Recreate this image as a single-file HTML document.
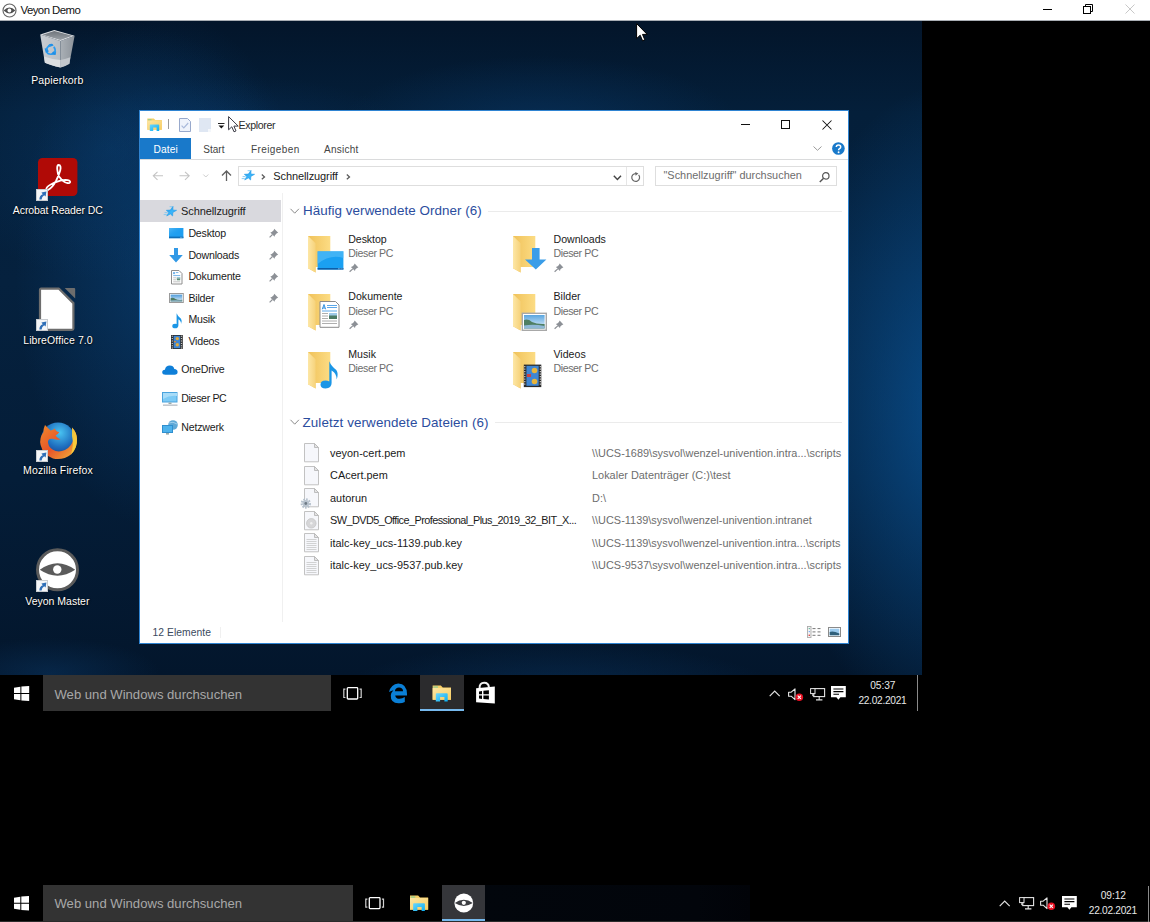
<!DOCTYPE html>
<html><head><meta charset="utf-8"><title>Veyon Demo</title>
<style>
html,body{margin:0;padding:0;}
body{width:1150px;height:922px;position:relative;overflow:hidden;background:#000;font-family:"Liberation Sans", sans-serif;}
.t{position:absolute;white-space:nowrap;font-family:"Liberation Sans", sans-serif;}
svg{overflow:visible}
</style></head><body>

<svg width="0" height="0" style="position:absolute"><defs><linearGradient id="gd" x1="0" y1="0" x2="1" y2="1"><stop offset="0" stop-color="#6cc4f8" stop-opacity="0.7"/><stop offset="0.6" stop-color="#1e9ef0" stop-opacity="0"/></linearGradient></defs></svg>
<div style="position:absolute;left:0px;top:0px;width:1150px;height:20px;background:#fff"></div>
<div style="position:absolute;left:0px;top:20px;width:1150px;height:1px;background:#a9aeb4"></div>
<svg style="position:absolute;left:1.5px;top:2.6px;" width="15" height="15" viewBox="0 0 15 15"><circle cx="7.5" cy="7.5" r="6.5" fill="none" stroke="#666" stroke-width="1.15"/><path d="M1.6 7.5 Q7.5 1.7 13.4 7.5 Q7.5 13.3 1.6 7.5Z" fill="#505050"/><circle cx="7.4" cy="7.5" r="1.9" fill="#fff"/></svg>
<div class="t" style="left:20.50px;top:4.65px;font-size:11.4px;line-height:11.4px;color:#111;letter-spacing:-0.55px">Veyon Demo</div>
<div style="position:absolute;left:1043px;top:9px;width:9px;height:1px;background:#000"></div>
<svg style="position:absolute;left:1083px;top:4px;" width="11" height="10" viewBox="0 0 11 10"><rect x="0.5" y="2.5" width="7" height="7" fill="none" stroke="#000" stroke-width="1"/><path d="M2.5 2.5 V0.5 H9.5 V7.5 H7.5" fill="none" stroke="#000" stroke-width="1"/></svg>
<svg style="position:absolute;left:1125px;top:4px;" width="10" height="10" viewBox="0 0 10 10"><path d="M0.5 0.5 L9.5 9.5 M9.5 0.5 L0.5 9.5" stroke="#c8c8c8" stroke-width="1"/></svg>
<div style="position:absolute;left:0px;top:21px;width:922px;height:654px;background:radial-gradient(ellipse 190px 330px at 960px 390px, rgba(10,88,158,0.8), rgba(10,88,158,0) 100%),radial-gradient(ellipse 170px 130px at 110px 130px, rgba(12,72,132,0.32), rgba(12,72,132,0) 100%),radial-gradient(ellipse 150px 260px at 165px 250px, rgba(12,80,145,0.45), rgba(12,80,145,0) 100%),radial-gradient(ellipse 200px 70px at 540px 105px, rgba(10,62,115,0.45), rgba(10,62,115,0) 100%),radial-gradient(ellipse 160px 50px at 240px 105px, rgba(10,55,105,0.3), rgba(10,55,105,0) 100%),radial-gradient(ellipse 110px 35px at 50px 652px, rgba(12,62,112,0.4), rgba(12,62,112,0) 100%),radial-gradient(ellipse 220px 50px at 560px 672px, rgba(12,62,112,0.45), rgba(12,62,112,0) 100%),linear-gradient(180deg,#03152a 0%,#041f3a 14%,#05213e 40%,#041d38 70%,#03162c 100%)"></div>
<svg style="position:absolute;left:40px;top:29px;" width="36" height="40" viewBox="0 0 36 40"><defs><linearGradient id="rbl" x1="0" y1="0" x2="1" y2="0"><stop offset="0" stop-color="#c9cdd2"/><stop offset="1" stop-color="#b9bec4"/></linearGradient><linearGradient id="rbr" x1="0" y1="0" x2="1" y2="0"><stop offset="0" stop-color="#aab0b6"/><stop offset="1" stop-color="#8d939a"/></linearGradient><linearGradient id="rbi" x1="0" y1="0" x2="0" y2="1"><stop offset="0" stop-color="#6d737a"/><stop offset="1" stop-color="#9aa0a6"/></linearGradient></defs><path d="M0.2 5.6 L20.5 11.9 L20.5 38.5 Q11 36.5 4.9 33.8Z" fill="url(#rbl)"/><path d="M20.5 11.9 L34.6 6.7 L29.4 34.8 Q25 37.5 20.5 38.5Z" fill="url(#rbr)"/><path d="M4 27.5 Q12 30.5 20.5 31 L20.5 38.5 Q11 36.5 4.9 33.8Z" fill="#dcdee1"/><path d="M20.5 31 Q26 30 30.3 28.3 L29.4 34.8 Q25 37.5 20.5 38.5Z" fill="#c3c7cc"/><path d="M0.2 5.6 L14.3 0.9 L34.6 6.7 L20.5 11.9Z" fill="#e2e4e7"/><path d="M2.6 5.7 L14.3 1.9 L32.2 6.8 L20.4 10.9Z" fill="url(#rbi)"/><g fill="#1e8ee6"><path d="M7.5 17.2 Q9.5 14 12.6 15 L13.6 16.6 L10.8 17.6Z"/><path d="M4.6 19.5 L5.8 23.8 L8.8 22.6 L7.2 19.2Z"/><path d="M10.5 25.5 L15.6 26 L16.2 22.5 L13.2 22.4Z"/></g><g fill="none" stroke="#2a9bf0" stroke-width="1.7"><path d="M6.4 21.5 Q6.6 17.4 10.5 16.6"/><path d="M13.8 17.8 Q16 20.5 14.6 23.8"/><path d="M12.6 25 Q8.5 26 6.5 23"/></g></svg>
<div class="t" style="left:-42.70px;width:200px;text-align:center;top:74.61px;font-size:10.5px;line-height:10.5px;color:#fff;text-shadow:0 1px 2px rgba(0,0,0,0.9),0 0 1px rgba(0,0,0,0.8);letter-spacing:0.15px">Papierkorb</div>
<svg style="position:absolute;left:38px;top:158px;" width="40" height="38" viewBox="0 0 40 38"><rect x="0" y="0" width="39.4" height="38" rx="4.5" fill="#b00a06"/><path d="M20.6 7 Q23.5 7.2 22.2 12.5 Q21 17 18 23 Q14 30 10.3 31.8 Q8 32.8 8.4 30.6 Q9.2 28 16 24.8 Q23 22 27.5 21.8 Q32 22 32.2 23.8 Q32.2 25.6 29 25 Q25 24 21.5 19 Q19.4 15.8 19.2 11 Q19 7.1 20.6 7Z" fill="none" stroke="#fff" stroke-width="1.8" stroke-linejoin="round"/></svg>
<svg style="position:absolute;left:36px;top:189px;" width="12" height="12" viewBox="0 0 12 12"><rect x="0.5" y="0.5" width="11" height="11" fill="#f4f6f8" stroke="#c8ccd0" stroke-width="1"/><path d="M3.4 10.6 Q3.2 6.6 6.8 5.2 L5.4 3.6 L10.4 2.4 L9.6 7.4 L8.2 6.2 Q5.8 7.4 5.6 10.6Z" fill="#2f6fb7"/></svg>
<div class="t" style="left:-42.20px;width:200px;text-align:center;top:205.01px;font-size:10.5px;line-height:10.5px;color:#fff;text-shadow:0 1px 2px rgba(0,0,0,0.9),0 0 1px rgba(0,0,0,0.8);letter-spacing:-0.1px">Acrobat Reader DC</div>
<svg style="position:absolute;left:39px;top:287px;" width="38" height="45" viewBox="0 0 38 45"><path d="M2 1.7 H20 L34.4 16.1 V41.5 Q34.4 42.8 33 42.8 H2.2 Q1 42.8 1 41.5 V3 Q1 1.7 2.2 1.7Z" fill="#fff" stroke="#6d6d6d" stroke-width="2.2" stroke-linejoin="round"/><path d="M25.7 1 H35.2 Q36.2 1 36.2 2 V11.6Z" fill="#6d6d6d"/></svg>
<svg style="position:absolute;left:36px;top:319px;" width="12" height="12" viewBox="0 0 12 12"><rect x="0.5" y="0.5" width="11" height="11" fill="#f4f6f8" stroke="#c8ccd0" stroke-width="1"/><path d="M3.4 10.6 Q3.2 6.6 6.8 5.2 L5.4 3.6 L10.4 2.4 L9.6 7.4 L8.2 6.2 Q5.8 7.4 5.6 10.6Z" fill="#2f6fb7"/></svg>
<div class="t" style="left:-42.00px;width:200px;text-align:center;top:335.41px;font-size:10.5px;line-height:10.5px;color:#fff;text-shadow:0 1px 2px rgba(0,0,0,0.9),0 0 1px rgba(0,0,0,0.8);letter-spacing:0.1px">LibreOffice 7.0</div>
<svg style="position:absolute;left:37px;top:419px;" width="42" height="42" viewBox="0 0 42 42"><defs><radialGradient id="fxg" cx="0.55" cy="0.3" r="0.7"><stop offset="0" stop-color="#49c4f2"/><stop offset="0.6" stop-color="#1f6fbf"/><stop offset="1" stop-color="#173e8c"/></radialGradient><linearGradient id="fxo" x1="0" y1="0" x2="1" y2="1"><stop offset="0" stop-color="#f08a2a"/><stop offset="0.5" stop-color="#e8542a"/><stop offset="1" stop-color="#f4b83a"/></linearGradient></defs><circle cx="21" cy="20.5" r="17" fill="url(#fxg)"/><path d="M8 6 Q6.2 10 6.5 13 Q2 19 3.6 26 Q6 36 16 39.5 Q26 41.5 34 35.5 Q40.5 29 40 20 Q39.6 13 35 8.5 Q37.5 14 36.6 19 Q35.5 27 28 31 Q21 34 15.5 30.5 Q10.5 27 11 22 Q12 19 15.5 19.8 Q20 21 23.5 20.5 Q19.6 18.4 18.5 16.5 Q21 15.6 22.3 13 Q19 12.8 17.8 9.5 Q16.5 11 13.5 11.6 Q11 9 8 6Z" fill="url(#fxo)"/><path d="M35 8.5 Q39.6 13 40 20 Q40.5 29 34 35.5 Q37 26 35 17Z" fill="#f9d23c" opacity="0.9"/></svg>
<svg style="position:absolute;left:36px;top:450px;" width="12" height="12" viewBox="0 0 12 12"><rect x="0.5" y="0.5" width="11" height="11" fill="#f4f6f8" stroke="#c8ccd0" stroke-width="1"/><path d="M3.4 10.6 Q3.2 6.6 6.8 5.2 L5.4 3.6 L10.4 2.4 L9.6 7.4 L8.2 6.2 Q5.8 7.4 5.6 10.6Z" fill="#2f6fb7"/></svg>
<div class="t" style="left:-42.00px;width:200px;text-align:center;top:465.41px;font-size:10.5px;line-height:10.5px;color:#fff;text-shadow:0 1px 2px rgba(0,0,0,0.9),0 0 1px rgba(0,0,0,0.8);letter-spacing:0.15px">Mozilla Firefox</div>
<svg style="position:absolute;left:36px;top:548px;" width="44" height="44" viewBox="0 0 44 44"><circle cx="21.5" cy="21.8" r="20" fill="#fff" stroke="#5b5b5b" stroke-width="3"/><path d="M3.8 21.8 Q21.5 8.8 39.2 21.8 Q21.5 33.6 3.8 21.8Z" fill="#5b5b5b"/><circle cx="21.3" cy="21.5" r="4.2" fill="#fff"/></svg>
<svg style="position:absolute;left:36px;top:580px;" width="12" height="12" viewBox="0 0 12 12"><rect x="0.5" y="0.5" width="11" height="11" fill="#f4f6f8" stroke="#c8ccd0" stroke-width="1"/><path d="M3.4 10.6 Q3.2 6.6 6.8 5.2 L5.4 3.6 L10.4 2.4 L9.6 7.4 L8.2 6.2 Q5.8 7.4 5.6 10.6Z" fill="#2f6fb7"/></svg>
<div class="t" style="left:-42.70px;width:200px;text-align:center;top:595.91px;font-size:10.5px;line-height:10.5px;color:#fff;text-shadow:0 1px 2px rgba(0,0,0,0.9),0 0 1px rgba(0,0,0,0.8);letter-spacing:0px">Veyon Master</div>
<div style="position:absolute;left:0px;top:675px;width:922px;height:36px;background:#000"></div>
<div style="position:absolute;left:43px;top:675px;width:288px;height:36px;background:#333"></div>
<div class="t" style="left:54.50px;top:687.81px;font-size:13.1px;line-height:13.1px;color:#a8a8a8;">Web und Windows durchsuchen</div>
<div style="position:absolute;left:917px;top:675px;width:1px;height:36px;background:#8a8a8a"></div>
<div style="position:absolute;left:43px;top:885px;width:310px;height:36px;background:#333"></div>
<div class="t" style="left:54.50px;top:897.41px;font-size:13.1px;line-height:13.1px;color:#a8a8a8;">Web und Windows durchsuchen</div>
<div style="position:absolute;left:485px;top:885px;width:265px;height:36px;background:linear-gradient(90deg,#02060c 0%,#02050b 80%,#010308 100%)"></div>
<div style="position:absolute;left:442px;top:885px;width:43px;height:36px;background:#35363a"></div>
<div style="position:absolute;left:442px;top:919px;width:43px;height:2px;background:#76b9ed"></div>
<div style="position:absolute;left:0px;top:921px;width:1150px;height:1px;background:#2b2b2b"></div>
<div style="position:absolute;left:1148px;top:886px;width:1px;height:36px;background:#8a8a8a"></div>
<svg style="position:absolute;left:14px;top:686px;" width="15.2" height="15" viewBox="0 0 15.2 15"><path d="M0 1.80 L6.38 0.82 V7.05 H0Z" fill="#fff"/><path d="M7.38 0.60 L15.20 0 V7.05 H7.38Z" fill="#fff"/><path d="M0 7.95 H6.38 V14.17 L0 13.20Z" fill="#fff"/><path d="M7.38 7.95 H15.20 V15.00 L7.38 14.40Z" fill="#fff"/></svg>
<svg style="position:absolute;left:343.3px;top:687.3px;" width="19" height="12.7" viewBox="0 0 19 12.7"><rect x="4.3" y="0.7" width="10.4" height="11.3" rx="0.8" fill="none" stroke="#fff" stroke-width="1.3"/><path d="M2.4 2.2 H0.8 V10.5 H2.4 M16.6 2.2 H18.2 V10.5 H16.6" fill="none" stroke="#d0d0d0" stroke-width="1.2"/></svg>
<svg style="position:absolute;left:385px;top:680px;" width="26" height="26" viewBox="0 0 26 26"><path fill-rule="evenodd" d="M4 12 Q6 4 13.3 3.4 Q21.8 3.6 22 14 V15.4 H10.2 Q10.8 18.8 14.5 18.8 Q17.5 18.8 19.8 17 V22 Q17 23.4 13.5 23.2 Q5.4 23 5.8 15.5 Q6 12.5 8.4 10.2 Q6.2 10.8 4 12Z M9.9 11.3 Q10.4 7.6 14 7.6 Q17.8 7.6 18.1 11.3Z" fill="#0a7fd6"/></svg>
<div style="position:absolute;left:420px;top:675px;width:44px;height:36px;background:#2b2b2d"></div>
<div style="position:absolute;left:420px;top:709px;width:44px;height:2px;background:#76b9ed"></div>
<svg style="position:absolute;left:432.3px;top:685.3px;overflow:hidden" width="19.5" height="16.7" viewBox="0 0 15 13.2"><defs><linearGradient id="tfb1" x1="0" y1="0" x2="1" y2="1"><stop offset="0" stop-color="#fde6a4"/><stop offset="1" stop-color="#f7cd62"/></linearGradient><linearGradient id="tbl1" x1="0" y1="0" x2="1" y2="1"><stop offset="0" stop-color="#6fd6fa"/><stop offset="1" stop-color="#08aef2"/></linearGradient></defs><path d="M0.3 0.4 H6.8 L8.3 1.9 H14.8 V11.7 H0.3Z" fill="#f7cf66"/><rect x="0.3" y="2.4" width="14.5" height="9.3" fill="url(#tfb1)"/><rect x="0.9" y="1" width="3.6" height="1.3" fill="#a3cf8c"/><path d="M2.8 13 V7.2 Q2.8 6.5 3.5 6.5 H11.5 Q12.2 6.5 12.2 7.2 V13 H9.6 V9.5 H6.2 V13Z" fill="url(#tbl1)"/></svg>
<svg style="position:absolute;left:472px;top:678px;" width="26" height="28" viewBox="0 0 26 28"><path d="M7.6 10 Q7.4 4.8 12.2 4.8 Q16.6 4.8 16.9 9.4" fill="none" stroke="#f0f0f0" stroke-width="2"/><path d="M4.1 10.2 L22.8 8.4 V25.6 L4.1 24.2Z" fill="#fff"/><path d="M7 13.4 L10 13 V16.3 H7Z M11.4 12.8 L16.9 12.2 V16.3 H11.4Z M7 17.6 H10 V20.9 L7 20.6Z M11.4 17.6 H16.9 V21.6 L11.4 21.1Z" fill="#000"/></svg>
<svg style="position:absolute;left:768.5px;top:690px;" width="12" height="7" viewBox="0 0 12 7"><path d="M0.7 6.2 L5.7 1 L10.7 6.2" fill="none" stroke="#e0e0e0" stroke-width="1.2"/></svg>
<svg style="position:absolute;left:788.2px;top:687.8px;" width="16" height="14" viewBox="0 0 16 14"><path d="M0.6 4.2 H3.2 L7 0.8 V11.6 L3.2 8.2 H0.6Z" fill="none" stroke="#e6e6e6" stroke-width="1.1" stroke-linejoin="round"/><circle cx="11.3" cy="9.2" r="3.8" fill="#e81123"/><path d="M9.7 7.6 L12.9 10.8 M12.9 7.6 L9.7 10.8" stroke="#fff" stroke-width="1.1"/></svg>
<svg style="position:absolute;left:810px;top:687.8px;" width="16" height="13" viewBox="0 0 16 13"><rect x="3.8" y="0.6" width="10.8" height="8" fill="none" stroke="#e6e6e6" stroke-width="1.1"/><path d="M9.2 8.6 V11.4 M6 11.9 H12.4" stroke="#e6e6e6" stroke-width="1.1"/><rect x="0.6" y="0.6" width="4.4" height="5" fill="#000" stroke="#e6e6e6" stroke-width="1"/><path d="M2.8 5.6 V8 H3.8" stroke="#e6e6e6" stroke-width="1" fill="none"/></svg>
<svg style="position:absolute;left:831.1px;top:685.8px;" width="15" height="15" viewBox="0 0 15 15"><path d="M0 0 H14.8 V11.2 H9.4 L7.4 13.8 L5.4 11.2 H0Z" fill="#fff"/><path d="M2.4 3 H12.4 M2.4 5.6 H12.4 M2.4 8.2 H8" stroke="#000" stroke-width="1.1"/></svg>
<div class="t" style="left:870.30px;top:680.57px;font-size:10.2px;line-height:10.2px;color:#e8e8e8;letter-spacing:-0.1px">05:37</div>
<div class="t" style="left:858.40px;top:695.97px;font-size:10.2px;line-height:10.2px;color:#e8e8e8;letter-spacing:-0.3px">22.02.2021</div>
<svg style="position:absolute;left:14.1px;top:895.7px;" width="15" height="14.5" viewBox="0 0 15 14.5"><path d="M0 1.74 L6.30 0.80 V6.81 H0Z" fill="#fff"/><path d="M7.30 0.58 L15.00 0 V6.81 H7.30Z" fill="#fff"/><path d="M0 7.69 H6.30 V13.70 L0 12.76Z" fill="#fff"/><path d="M7.30 7.69 H15.00 V14.50 L7.30 13.92Z" fill="#fff"/></svg>
<svg style="position:absolute;left:364.7px;top:896.9px;" width="19.3" height="12.3" viewBox="0 0 19.3 12.3"><rect x="4.3" y="0.7" width="10.7" height="10.9" rx="0.8" fill="none" stroke="#fff" stroke-width="1.3"/><path d="M2.4 2.2 H0.8 V10.1 H2.4 M16.9 2.2 H18.5 V10.1 H16.9" fill="none" stroke="#d0d0d0" stroke-width="1.2"/></svg>
<svg style="position:absolute;left:409px;top:894.5px;overflow:hidden" width="20" height="16.5" viewBox="0 0 15 13.2"><defs><linearGradient id="tfb2" x1="0" y1="0" x2="1" y2="1"><stop offset="0" stop-color="#fde6a4"/><stop offset="1" stop-color="#f7cd62"/></linearGradient><linearGradient id="tbl2" x1="0" y1="0" x2="1" y2="1"><stop offset="0" stop-color="#6fd6fa"/><stop offset="1" stop-color="#08aef2"/></linearGradient></defs><path d="M0.3 0.4 H6.8 L8.3 1.9 H14.8 V11.7 H0.3Z" fill="#f7cf66"/><rect x="0.3" y="2.4" width="14.5" height="9.3" fill="url(#tfb2)"/><rect x="0.9" y="1" width="3.6" height="1.3" fill="#a3cf8c"/><path d="M2.8 13 V7.2 Q2.8 6.5 3.5 6.5 H11.5 Q12.2 6.5 12.2 7.2 V13 H9.6 V9.5 H6.2 V13Z" fill="url(#tbl2)"/></svg>
<svg style="position:absolute;left:453px;top:893px;" width="22" height="20" viewBox="0 0 22 20"><circle cx="10.8" cy="10" r="9.4" fill="#fff"/><path d="M1.8 10 Q10.8 3.4 19.8 10 Q10.8 15.8 1.8 10Z" fill="#3d3e42"/><circle cx="10.8" cy="9.8" r="2.1" fill="#fff"/></svg>
<svg style="position:absolute;left:999px;top:899.5px;" width="12" height="7" viewBox="0 0 12 7"><path d="M0.7 6.2 L5.7 1 L10.7 6.2" fill="none" stroke="#e0e0e0" stroke-width="1.2"/></svg>
<svg style="position:absolute;left:1018.5px;top:897.4px;" width="16" height="13" viewBox="0 0 16 13"><rect x="3.8" y="0.6" width="10.8" height="8" fill="none" stroke="#e6e6e6" stroke-width="1.1"/><path d="M9.2 8.6 V11.4 M6 11.9 H12.4" stroke="#e6e6e6" stroke-width="1.1"/><rect x="0.6" y="0.6" width="4.4" height="5" fill="#000" stroke="#e6e6e6" stroke-width="1"/><path d="M2.8 5.6 V8 H3.8" stroke="#e6e6e6" stroke-width="1" fill="none"/></svg>
<svg style="position:absolute;left:1040px;top:897px;" width="16" height="14" viewBox="0 0 16 14"><path d="M0.6 4.2 H3.2 L7 0.8 V11.6 L3.2 8.2 H0.6Z" fill="none" stroke="#e6e6e6" stroke-width="1.1" stroke-linejoin="round"/><circle cx="11.3" cy="9.2" r="3.8" fill="#e81123"/><path d="M9.7 7.6 L12.9 10.8 M12.9 7.6 L9.7 10.8" stroke="#fff" stroke-width="1.1"/></svg>
<svg style="position:absolute;left:1062px;top:896px;" width="15" height="15" viewBox="0 0 15 15"><path d="M0 0 H14.8 V11.2 H9.4 L7.4 13.8 L5.4 11.2 H0Z" fill="#fff"/><path d="M2.4 3 H12.4 M2.4 5.6 H12.4 M2.4 8.2 H8" stroke="#000" stroke-width="1.1"/></svg>
<div class="t" style="left:1100.80px;top:890.77px;font-size:10.2px;line-height:10.2px;color:#e8e8e8;letter-spacing:-0.1px">09:12</div>
<div class="t" style="left:1088.80px;top:905.97px;font-size:10.2px;line-height:10.2px;color:#e8e8e8;letter-spacing:-0.3px">22.02.2021</div>
<div style="position:absolute;left:139px;top:110px;width:708px;height:532px;background:#fff;border:1px solid #2f84d2"></div>
<svg style="position:absolute;left:147px;top:117.5px;" width="16" height="15" viewBox="0 0 16 15"><defs><linearGradient id="tfb" x1="0" y1="0" x2="1" y2="1"><stop offset="0" stop-color="#fde6a4"/><stop offset="1" stop-color="#f7cd62"/></linearGradient><linearGradient id="tbl" x1="0" y1="0" x2="1" y2="1"><stop offset="0" stop-color="#6fd6fa"/><stop offset="1" stop-color="#08aef2"/></linearGradient></defs><path d="M0.3 0.4 H6.8 L8.3 1.9 H14.8 V11.7 H0.3Z" fill="#f7cf66"/><rect x="0.3" y="2.4" width="14.5" height="9.3" fill="url(#tfb)"/><rect x="0.9" y="1" width="3.6" height="1.3" fill="#a3cf8c"/><path d="M2.8 13 V7.2 Q2.8 6.5 3.5 6.5 H11.5 Q12.2 6.5 12.2 7.2 V13 H9.6 V9.5 H6.2 V13Z" fill="url(#tbl)"/></svg>
<div style="position:absolute;left:168px;top:119px;width:1px;height:10px;background:#9a9a9a"></div>
<svg style="position:absolute;left:179px;top:118px;" width="12" height="14" viewBox="0 0 12 14"><path d="M0.5 0.5 H8.5 L11.5 3.5 V13.5 H0.5Z" fill="#eef3fb" stroke="#98a9cc" stroke-width="1"/><path d="M2.6 7.6 L4.8 9.8 L9.2 5" fill="none" stroke="#a9badb" stroke-width="1.2"/></svg>
<svg style="position:absolute;left:199px;top:118px;" width="12" height="14" viewBox="0 0 12 14"><path d="M0 0 H12 V14 H0Z" fill="#dfe7f3"/><path d="M9 11 H12 V14 H9Z" fill="#f4f7fb"/></svg>
<svg style="position:absolute;left:218px;top:122px;" width="7" height="7" viewBox="0 0 7 7"><rect x="0" y="1" width="6.5" height="1" fill="#222"/><path d="M0.5 3.6 H6.2 L3.35 6.6Z" fill="#111"/></svg>
<div class="t" style="left:238.50px;top:119.73px;font-size:10.6px;line-height:10.6px;color:#2b2b2b;letter-spacing:-0.35px">Explorer</div>
<div style="position:absolute;left:741px;top:124px;width:9px;height:1px;background:#111"></div>
<div style="position:absolute;left:781px;top:120px;width:9px;height:9px;border:1px solid #111;box-sizing:border-box"></div>
<svg style="position:absolute;left:822px;top:120px;" width="10" height="10" viewBox="0 0 10 10"><path d="M0.5 0.5 L9.5 9.5 M9.5 0.5 L0.5 9.5" stroke="#111" stroke-width="1.05"/></svg>
<div style="position:absolute;left:140px;top:138px;width:51px;height:21px;background:#1979ca"></div>
<div class="t" style="left:153.60px;top:144.97px;font-size:10.2px;line-height:10.2px;color:#fff;letter-spacing:0.1px">Datei</div>
<div class="t" style="left:203.30px;top:145.13px;font-size:10px;line-height:10px;color:#444;">Start</div>
<div class="t" style="left:251.00px;top:145.13px;font-size:10px;line-height:10px;color:#444;letter-spacing:0.4px">Freigeben</div>
<div class="t" style="left:324.00px;top:145.13px;font-size:10px;line-height:10px;color:#444;letter-spacing:0.25px">Ansicht</div>
<div style="position:absolute;left:140px;top:159px;width:708px;height:1px;background:#dadbdc"></div>
<svg style="position:absolute;left:813px;top:146px;" width="9" height="5" viewBox="0 0 9 5"><path d="M0.5 0.5 L4.5 4.3 L8.5 0.5" fill="none" stroke="#9b9b9b" stroke-width="1"/></svg>
<svg style="position:absolute;left:831.5px;top:141.8px;" width="13" height="13" viewBox="0 0 13 13"><circle cx="6.4" cy="6.5" r="6.3" fill="#1979ca"/><path d="M4.3 5.1 Q4.3 2.9 6.5 2.9 Q8.7 2.9 8.7 4.9 Q8.7 6.2 7.3 6.8 Q6.6 7.2 6.6 8.2" fill="none" stroke="#fff" stroke-width="1.5"/><circle cx="6.6" cy="10.2" r="0.95" fill="#fff"/></svg>
<svg style="position:absolute;left:152px;top:171px;" width="12" height="10" viewBox="0 0 12 10"><path d="M11 4.8 H1.5 M5.5 0.8 L1.3 4.8 L5.5 8.8" fill="none" stroke="#c4c4c4" stroke-width="1.1"/></svg>
<svg style="position:absolute;left:179px;top:171px;" width="12" height="10" viewBox="0 0 12 10"><path d="M0.5 4.8 H10 M6 0.8 L10.2 4.8 L6 8.8" fill="none" stroke="#c4c4c4" stroke-width="1.1"/></svg>
<svg style="position:absolute;left:203px;top:174px;" width="6" height="4" viewBox="0 0 6 4"><path d="M0.3 0.5 L2.8 3 L5.3 0.5" fill="none" stroke="#c8c8c8" stroke-width="0.9"/></svg>
<svg style="position:absolute;left:220.5px;top:170px;" width="11" height="11" viewBox="0 0 11 11"><path d="M5.5 11 V1.2 M1 5.5 L5.5 1 L10 5.5" fill="none" stroke="#5f5f5f" stroke-width="1.3"/></svg>
<div style="position:absolute;left:238px;top:166px;width:406px;height:20px;border:1px solid #dedede;box-sizing:border-box"></div>
<div style="position:absolute;left:626px;top:167px;width:1px;height:18px;background:#e6e6e6"></div>
<svg style="position:absolute;left:241.8px;top:169.8px;" width="14" height="11" viewBox="0 0 14 11"><defs><linearGradient id="sg" x1="0" y1="0" x2="1" y2="1"><stop offset="0" stop-color="#1b8fe0"/><stop offset="0.55" stop-color="#3ab6fb"/><stop offset="1" stop-color="#1a97ea"/></linearGradient></defs><path d="M9.00 0.30 L8.92 4.04 L12.60 4.30 L8.82 6.46 L8.60 10.00 L6.35 7.89 L2.70 10.00 L4.77 6.46 L2.30 4.30 L6.35 4.04Z" fill="url(#sg)" stroke="#2a9de8" stroke-width="0.6" stroke-linejoin="round"/><path d="M5.6 0.7 H8.3 M0.6 6.6 H3.6 M-0.3 8.6 H2.8" stroke="#7cc6f2" stroke-width="0.9"/></svg>
<svg style="position:absolute;left:261px;top:174px;" width="5" height="7" viewBox="0 0 5 7"><path d="M0.8 0.6 L3.5 2.9 L0.8 5.2" fill="none" stroke="#5a5a5a" stroke-width="1.25"/></svg>
<div class="t" style="left:273.30px;top:170.89px;font-size:11px;line-height:11px;color:#1a1a1a;letter-spacing:-0.1px">Schnellzugriff</div>
<svg style="position:absolute;left:345.5px;top:174px;" width="5" height="7" viewBox="0 0 5 7"><path d="M0.8 0.6 L3.5 2.9 L0.8 5.2" fill="none" stroke="#5a5a5a" stroke-width="1.25"/></svg>
<svg style="position:absolute;left:613px;top:175px;" width="9" height="6" viewBox="0 0 9 6"><path d="M0.8 0.8 L4.4 4.6 L8 0.8" fill="none" stroke="#444" stroke-width="1.4"/></svg>
<svg style="position:absolute;left:630.5px;top:171.5px;" width="10" height="11" viewBox="0 0 10 11"><path d="M7.6 2.9 A3.9 3.9 0 1 1 4.9 1.6" fill="none" stroke="#666" stroke-width="1.2"/><path d="M4.2 0 L7.4 1.5 L4.6 3.8Z" fill="#666"/></svg>
<div style="position:absolute;left:655px;top:166px;width:182px;height:20px;border:1px solid #dedede;box-sizing:border-box"></div>
<div class="t" style="left:663.50px;top:170.37px;font-size:10.9px;line-height:10.9px;color:#6d6d6d;letter-spacing:0.0px">"Schnellzugriff" durchsuchen</div>
<svg style="position:absolute;left:818.5px;top:172px;" width="11" height="11" viewBox="0 0 11 11"><circle cx="6.8" cy="3.9" r="3.2" fill="none" stroke="#555" stroke-width="1.2"/><path d="M4.6 6.2 L0.8 10" stroke="#555" stroke-width="1.5"/></svg>
<div style="position:absolute;left:140px;top:200px;width:141px;height:22px;background:#d9d9de"></div>
<div style="position:absolute;left:282px;top:193px;width:1px;height:429px;background:#f0f0f0"></div>
<svg style="position:absolute;left:163.5px;top:206px;" width="14" height="11" viewBox="0 0 14 11"><defs><linearGradient id="sg2" x1="0" y1="0" x2="1" y2="1"><stop offset="0" stop-color="#1b8fe0"/><stop offset="0.55" stop-color="#3ab6fb"/><stop offset="1" stop-color="#1a97ea"/></linearGradient></defs><path d="M9.00 0.30 L8.92 4.04 L12.60 4.30 L8.82 6.46 L8.60 10.00 L6.35 7.89 L2.70 10.00 L4.77 6.46 L2.30 4.30 L6.35 4.04Z" fill="url(#sg2)" stroke="#2a9de8" stroke-width="0.6" stroke-linejoin="round"/><path d="M5.6 0.7 H8.3 M0.6 6.6 H3.6 M-0.3 8.6 H2.8" stroke="#7cc6f2" stroke-width="0.9"/></svg>
<div class="t" style="left:181.00px;top:205.89px;font-size:11px;line-height:11px;color:#1a1a1a;letter-spacing:-0.1px">Schnellzugriff</div>
<div class="t" style="left:188.40px;top:227.93px;font-size:10.6px;line-height:10.6px;color:#1a1a1a;letter-spacing:-0.2px">Desktop</div>
<svg style="position:absolute;left:169px;top:228.0px;" width="15" height="11" viewBox="0 0 15 11"><rect x="0" y="0" width="14.4" height="10.2" fill="#1e9ef0"/><rect x="0" y="0" width="14.4" height="10.2" fill="url(#gd)"/><rect x="0" y="8.6" width="14.4" height="1.6" fill="#0f6fb8"/><path d="M11.2 9.4 H13.6" stroke="#cfe8fa" stroke-width="0.6" stroke-dasharray="0.6 0.5"/></svg>
<svg style="position:absolute;left:269px;top:228.4px;" width="10" height="10" viewBox="0 0 10 10"><path d="M5.2 0.8 L9.2 4.8 L7.8 5.3 L5.9 7.2 L5.6 8.7 L1.3 4.4 L2.8 4.1 L4.7 2.2Z" fill="#8c9096"/><path d="M3.5 6.5 L0.6 9.4" stroke="#8c9096" stroke-width="1.1"/></svg>
<div class="t" style="left:188.40px;top:249.53px;font-size:10.6px;line-height:10.6px;color:#1a1a1a;letter-spacing:-0.2px">Downloads</div>
<svg style="position:absolute;left:169.3px;top:248.0px;" width="15" height="15" viewBox="0 0 15 15"><path d="M5 0 H9 V7 H13.8 L7 14.6 L0.2 7 H5Z" fill="#3199e6"/></svg>
<svg style="position:absolute;left:269px;top:250.0px;" width="10" height="10" viewBox="0 0 10 10"><path d="M5.2 0.8 L9.2 4.8 L7.8 5.3 L5.9 7.2 L5.6 8.7 L1.3 4.4 L2.8 4.1 L4.7 2.2Z" fill="#8c9096"/><path d="M3.5 6.5 L0.6 9.4" stroke="#8c9096" stroke-width="1.1"/></svg>
<div class="t" style="left:188.40px;top:271.13px;font-size:10.6px;line-height:10.6px;color:#1a1a1a;letter-spacing:-0.2px">Dokumente</div>
<svg style="position:absolute;left:171px;top:269.8px;" width="12" height="15" viewBox="0 0 12 15"><path d="M0.5 0.5 H8 L11 3.5 V14 H0.5Z" fill="#fff" stroke="#8e8e8e" stroke-width="1"/><path d="M2.2 4.2 L3 2 L3.8 4.2" stroke="#2f8fe0" stroke-width="0.7" fill="none"/><path d="M4.8 2.6 H7.4 M2.2 5.6 H9.2" stroke="#3a93e0" stroke-width="0.7"/><path d="M2.2 7.8 H5 M2.2 9.8 H5 M2.2 11.8 H9.2" stroke="#9a9a9a" stroke-width="0.6"/><rect x="5.8" y="7.3" width="3.4" height="3" fill="#5f8f75"/><rect x="5.8" y="7.3" width="3.4" height="1.2" fill="#a9d0ea"/></svg>
<svg style="position:absolute;left:269px;top:271.6px;" width="10" height="10" viewBox="0 0 10 10"><path d="M5.2 0.8 L9.2 4.8 L7.8 5.3 L5.9 7.2 L5.6 8.7 L1.3 4.4 L2.8 4.1 L4.7 2.2Z" fill="#8c9096"/><path d="M3.5 6.5 L0.6 9.4" stroke="#8c9096" stroke-width="1.1"/></svg>
<div class="t" style="left:188.40px;top:292.73px;font-size:10.6px;line-height:10.6px;color:#1a1a1a;letter-spacing:-0.2px">Bilder</div>
<svg style="position:absolute;left:169px;top:293.00000000000006px;" width="15" height="10" viewBox="0 0 15 10"><defs><linearGradient id="sbsky" x1="0" y1="0" x2="0" y2="1"><stop offset="0" stop-color="#4c9ada"/><stop offset="1" stop-color="#e2f0fa"/></linearGradient></defs><rect x="0.5" y="0.5" width="13.8" height="9" fill="#fff" stroke="#9a9a9a" stroke-width="1"/><rect x="1.6" y="1.6" width="11.6" height="6.8" fill="url(#sbsky)"/><path d="M1.6 5.2 Q4 4.2 6.5 6 Q9 7.2 13.2 6.8 V8.4 H1.6Z" fill="#4f7a62"/><path d="M1.6 7.4 Q7 6.8 13.2 7.6 V8.4 H1.6Z" fill="#8db5d2"/></svg>
<svg style="position:absolute;left:269px;top:293.20000000000005px;" width="10" height="10" viewBox="0 0 10 10"><path d="M5.2 0.8 L9.2 4.8 L7.8 5.3 L5.9 7.2 L5.6 8.7 L1.3 4.4 L2.8 4.1 L4.7 2.2Z" fill="#8c9096"/><path d="M3.5 6.5 L0.6 9.4" stroke="#8c9096" stroke-width="1.1"/></svg>
<div class="t" style="left:188.40px;top:314.33px;font-size:10.6px;line-height:10.6px;color:#1a1a1a;letter-spacing:-0.2px">Musik</div>
<svg style="position:absolute;left:171.5px;top:312.8px;" width="11" height="16" viewBox="0 0 11 16"><path d="M4.6 0.3 Q5.8 3.6 9 5.8 Q10.6 8.2 9 11.2 Q9.4 8 6.4 6.2 V12.2 Q6.4 15.3 3.1 15.3 Q0.3 15.3 0.3 13.2 Q0.3 10.8 3.1 10.8 Q4 10.8 4.6 11.1Z" fill="#1b96e6"/></svg>
<div class="t" style="left:188.40px;top:335.93px;font-size:10.6px;line-height:10.6px;color:#1a1a1a;letter-spacing:-0.2px">Videos</div>
<svg style="position:absolute;left:171px;top:334.79999999999995px;" width="12" height="15" viewBox="0 0 12 15"><rect x="0" y="0" width="11.8" height="14" fill="#2b2b2b"/><rect x="2.6" y="0.8" width="6.6" height="12.4" fill="#3f86d3"/><circle cx="6.3" cy="3.6" r="1.7" fill="#e2a93a"/><circle cx="6.3" cy="9.8" r="1.7" fill="#e2a93a"/><rect x="3" y="6" width="2" height="1.4" fill="#c84"/><path d="M0.7 1.2 H1.9 M0.7 3.6 H1.9 M0.7 6 H1.9 M0.7 8.4 H1.9 M0.7 10.8 H1.9 M0.7 13 H1.9 M9.9 1.2 H11.1 M9.9 3.6 H11.1 M9.9 6 H11.1 M9.9 8.4 H11.1 M9.9 10.8 H11.1 M9.9 13 H11.1" stroke="#ddd" stroke-width="1"/></svg>
<div class="t" style="left:181.30px;top:364.33px;font-size:10.6px;line-height:10.6px;color:#1a1a1a;letter-spacing:-0.2px">OneDrive</div>
<svg style="position:absolute;left:161.5px;top:364.5px;" width="16" height="10" viewBox="0 0 16 10"><path d="M3.6 9.8 Q0.2 9.8 0.2 7.3 Q0.2 4.9 2.9 4.7 Q3.8 0.6 7.8 0.6 Q11.3 0.6 12.3 3.9 Q15.6 4.2 15.6 7 Q15.6 9.8 12.4 9.8Z" fill="#0f7fd8"/></svg>
<div class="t" style="left:181.30px;top:392.63px;font-size:10.6px;line-height:10.6px;color:#1a1a1a;letter-spacing:-0.35px">Dieser PC</div>
<svg style="position:absolute;left:161.5px;top:392px;" width="16" height="14" viewBox="0 0 16 14"><rect x="0.5" y="0.5" width="14.5" height="9.5" fill="#7ccaf5" stroke="#4aa3dd" stroke-width="1"/><path d="M1 1 H15 V4 Q8 3 1 7Z" fill="#a8dcf8"/><rect x="6.5" y="10.5" width="3" height="1.5" fill="#9aa"/><rect x="1" y="12.5" width="14.5" height="1.3" fill="#b5bcc4"/></svg>
<div class="t" style="left:181.30px;top:421.63px;font-size:10.6px;line-height:10.6px;color:#1a1a1a;letter-spacing:-0.2px">Netzwerk</div>
<svg style="position:absolute;left:161.5px;top:420px;" width="16" height="15" viewBox="0 0 16 15"><circle cx="11" cy="5" r="4.8" fill="#5fa8d6"/><path d="M7 3 Q11 1 15 4" stroke="#9fd0ee" stroke-width="1" fill="none"/><rect x="0.5" y="5.5" width="10" height="7" fill="#4db2ec" stroke="#2f8fcf" stroke-width="1"/><rect x="4" y="13" width="3" height="1.6" fill="#9aa"/></svg>
<svg style="position:absolute;left:290px;top:207.5px;" width="10" height="7" viewBox="0 0 10 7"><path d="M0.5 0.8 L4.7 5.2 L8.9 0.8" fill="none" stroke="#8a8a8a" stroke-width="1"/></svg>
<div class="t" style="left:303.00px;top:203.96px;font-size:13.4px;line-height:13.4px;color:#2b4d9e;letter-spacing:0.06px">Häufig verwendete Ordner (6)</div>
<div style="position:absolute;left:488px;top:210.5px;width:354px;height:1px;background:#ebebeb"></div>
<svg style="position:absolute;left:307.7px;top:236.1px;" width="40" height="40" viewBox="0 0 40 40"><defs><linearGradient id="fb" x1="0" y1="0" x2="1" y2="0"><stop offset="0" stop-color="#f0c25a"/><stop offset="1" stop-color="#fcdc84"/></linearGradient><linearGradient id="ff" x1="0" y1="0" x2="1" y2="0"><stop offset="0" stop-color="#fde7a6"/><stop offset="1" stop-color="#f6d27a"/></linearGradient></defs><path d="M0 0 H22.3 V31 H7.6 V36.4 L0 32.3Z" fill="url(#fb)"/><path d="M0 0 L7.6 7.2 V36.4 L0 32.3Z" fill="url(#ff)"/><rect x="9.6" y="15.3" width="25.8" height="18.2" fill="#1aa0f2"/><path d="M9.6 15.3 H35.4 V22 Q22 18 9.6 28Z" fill="#5cc0f7" opacity="0.6"/><rect x="9.6" y="32" width="25.8" height="1.6" fill="#0c5ea8"/><path d="M30 32.8 H34.6" stroke="#cfe8fa" stroke-width="0.7" stroke-dasharray="0.8 0.6"/></svg>
<div class="t" style="left:348.30px;top:233.83px;font-size:10.6px;line-height:10.6px;color:#1a1a1a;letter-spacing:-0.1px">Desktop</div>
<div class="t" style="left:348.30px;top:248.23px;font-size:10.6px;line-height:10.6px;color:#6d6d6d;letter-spacing:-0.4px">Dieser PC</div>
<svg style="position:absolute;left:348.90000000000003px;top:262.8px;" width="10" height="9" viewBox="0 0 10 9"><path d="M5.6 0.6 L9.4 4.4 L8 4.9 L6.3 6.6 L6 8 L1.9 3.9 L3.3 3.6 L5 1.9Z" fill="#8c9096"/><path d="M3.8 5.9 L0.6 8.8" stroke="#8c9096" stroke-width="1.2"/></svg>
<svg style="position:absolute;left:513.1px;top:236.1px;" width="40" height="40" viewBox="0 0 40 40"><defs><linearGradient id="fb" x1="0" y1="0" x2="1" y2="0"><stop offset="0" stop-color="#f0c25a"/><stop offset="1" stop-color="#fcdc84"/></linearGradient><linearGradient id="ff" x1="0" y1="0" x2="1" y2="0"><stop offset="0" stop-color="#fde7a6"/><stop offset="1" stop-color="#f6d27a"/></linearGradient></defs><path d="M0 0 H22.3 V31 H7.6 V36.4 L0 32.3Z" fill="url(#fb)"/><path d="M0 0 L7.6 7.2 V36.4 L0 32.3Z" fill="url(#ff)"/><path d="M19 12 H26.6 V23.4 H33.4 L22.8 33.4 L12 23.4 H19Z" fill="#3a9de8"/></svg>
<div class="t" style="left:553.50px;top:233.83px;font-size:10.6px;line-height:10.6px;color:#1a1a1a;letter-spacing:0px">Downloads</div>
<div class="t" style="left:553.50px;top:248.23px;font-size:10.6px;line-height:10.6px;color:#6d6d6d;letter-spacing:-0.4px">Dieser PC</div>
<svg style="position:absolute;left:554.1px;top:262.8px;" width="10" height="9" viewBox="0 0 10 9"><path d="M5.6 0.6 L9.4 4.4 L8 4.9 L6.3 6.6 L6 8 L1.9 3.9 L3.3 3.6 L5 1.9Z" fill="#8c9096"/><path d="M3.8 5.9 L0.6 8.8" stroke="#8c9096" stroke-width="1.2"/></svg>
<svg style="position:absolute;left:307.7px;top:293.7px;" width="40" height="40" viewBox="0 0 40 40"><defs><linearGradient id="fb" x1="0" y1="0" x2="1" y2="0"><stop offset="0" stop-color="#f0c25a"/><stop offset="1" stop-color="#fcdc84"/></linearGradient><linearGradient id="ff" x1="0" y1="0" x2="1" y2="0"><stop offset="0" stop-color="#fde7a6"/><stop offset="1" stop-color="#f6d27a"/></linearGradient></defs><path d="M0 0 H22.3 V31 H7.6 V36.4 L0 32.3Z" fill="url(#fb)"/><path d="M0 0 L7.6 7.2 V36.4 L0 32.3Z" fill="url(#ff)"/><path d="M12 7.5 H27.5 L31 11 V33.3 H12Z" fill="#fff" stroke="#8a8a8a" stroke-width="1"/><path d="M14.3 15.3 L16 10.5 L17.6 15.3 M14.8 14 H17" stroke="#2f8fe0" stroke-width="1" fill="none"/><path d="M19 11.5 H29 M19 13.5 H29 M14 17 H29" stroke="#4a9ee6" stroke-width="0.9"/><path d="M14 19.5 H20 M14 22 H20 M14 24.5 H20 M14 27 H29 M14 29.5 H29" stroke="#9a9a9a" stroke-width="0.8"/><rect x="21" y="19" width="8" height="6" fill="#4c7a64"/><rect x="21" y="19" width="8" height="2.5" fill="#9ec9e8"/></svg>
<div class="t" style="left:348.30px;top:291.43px;font-size:10.6px;line-height:10.6px;color:#1a1a1a;letter-spacing:0px">Dokumente</div>
<div class="t" style="left:348.30px;top:305.83px;font-size:10.6px;line-height:10.6px;color:#6d6d6d;letter-spacing:-0.4px">Dieser PC</div>
<svg style="position:absolute;left:348.90000000000003px;top:320.40000000000003px;" width="10" height="9" viewBox="0 0 10 9"><path d="M5.6 0.6 L9.4 4.4 L8 4.9 L6.3 6.6 L6 8 L1.9 3.9 L3.3 3.6 L5 1.9Z" fill="#8c9096"/><path d="M3.8 5.9 L0.6 8.8" stroke="#8c9096" stroke-width="1.2"/></svg>
<svg style="position:absolute;left:513.1px;top:293.7px;" width="40" height="40" viewBox="0 0 40 40"><defs><linearGradient id="fb" x1="0" y1="0" x2="1" y2="0"><stop offset="0" stop-color="#f0c25a"/><stop offset="1" stop-color="#fcdc84"/></linearGradient><linearGradient id="ff" x1="0" y1="0" x2="1" y2="0"><stop offset="0" stop-color="#fde7a6"/><stop offset="1" stop-color="#f6d27a"/></linearGradient></defs><path d="M0 0 H22.3 V31 H7.6 V36.4 L0 32.3Z" fill="url(#fb)"/><path d="M0 0 L7.6 7.2 V36.4 L0 32.3Z" fill="url(#ff)"/><defs><linearGradient id="sky" x1="0" y1="0" x2="0" y2="1"><stop offset="0" stop-color="#5aa6e0"/><stop offset="1" stop-color="#e6f2fa"/></linearGradient></defs><rect x="9.3" y="19.3" width="24" height="17" fill="#fff" stroke="#a8a8a8" stroke-width="1.4"/><rect x="11" y="21" width="20.6" height="13.6" fill="url(#sky)"/><path d="M11 26 Q15 24.5 19 28 Q24 30.5 31.6 30 V34.6 H11Z" fill="#4f7f62"/><path d="M11 31.5 Q21 30 31.6 32 V34.6 H11Z" fill="#8fb8d6"/></svg>
<div class="t" style="left:553.50px;top:291.43px;font-size:10.6px;line-height:10.6px;color:#1a1a1a;letter-spacing:0px">Bilder</div>
<div class="t" style="left:553.50px;top:305.83px;font-size:10.6px;line-height:10.6px;color:#6d6d6d;letter-spacing:-0.4px">Dieser PC</div>
<svg style="position:absolute;left:554.1px;top:320.40000000000003px;" width="10" height="9" viewBox="0 0 10 9"><path d="M5.6 0.6 L9.4 4.4 L8 4.9 L6.3 6.6 L6 8 L1.9 3.9 L3.3 3.6 L5 1.9Z" fill="#8c9096"/><path d="M3.8 5.9 L0.6 8.8" stroke="#8c9096" stroke-width="1.2"/></svg>
<svg style="position:absolute;left:307.7px;top:351.6px;" width="40" height="40" viewBox="0 0 40 40"><defs><linearGradient id="fb" x1="0" y1="0" x2="1" y2="0"><stop offset="0" stop-color="#f0c25a"/><stop offset="1" stop-color="#fcdc84"/></linearGradient><linearGradient id="ff" x1="0" y1="0" x2="1" y2="0"><stop offset="0" stop-color="#fde7a6"/><stop offset="1" stop-color="#f6d27a"/></linearGradient></defs><path d="M0 0 H22.3 V31 H7.6 V36.4 L0 32.3Z" fill="url(#fb)"/><path d="M0 0 L7.6 7.2 V36.4 L0 32.3Z" fill="url(#ff)"/><path d="M21.3 9.3 Q23 14 28.3 18 Q31 22 28.5 27.5 Q29 21.5 23.6 18.4 V31 Q23.6 36.4 17.6 36.4 Q12.5 36.4 12.5 32.8 Q12.5 28.6 17.6 28.6 Q19.8 28.6 21.3 29.5Z" fill="#1b96e6"/></svg>
<div class="t" style="left:348.30px;top:349.03px;font-size:10.6px;line-height:10.6px;color:#1a1a1a;letter-spacing:0px">Musik</div>
<div class="t" style="left:348.30px;top:363.43px;font-size:10.6px;line-height:10.6px;color:#6d6d6d;letter-spacing:-0.4px">Dieser PC</div>
<svg style="position:absolute;left:513.1px;top:351.6px;" width="40" height="40" viewBox="0 0 40 40"><defs><linearGradient id="fb" x1="0" y1="0" x2="1" y2="0"><stop offset="0" stop-color="#f0c25a"/><stop offset="1" stop-color="#fcdc84"/></linearGradient><linearGradient id="ff" x1="0" y1="0" x2="1" y2="0"><stop offset="0" stop-color="#fde7a6"/><stop offset="1" stop-color="#f6d27a"/></linearGradient></defs><path d="M0 0 H22.3 V31 H7.6 V36.4 L0 32.3Z" fill="url(#fb)"/><path d="M0 0 L7.6 7.2 V36.4 L0 32.3Z" fill="url(#ff)"/><rect x="10.8" y="12.6" width="17.5" height="22.5" fill="#2a2a2a"/><rect x="13.4" y="13.8" width="12.3" height="20" fill="#3f86d3"/><circle cx="21.5" cy="18.5" r="2.8" fill="#e8b43a"/><circle cx="21.5" cy="29.5" r="2.8" fill="#e8b43a"/><rect x="14" y="22" width="4" height="3" fill="#c44"/><path d="M11.8 14 V34 M27.3 14 V34" stroke="#ddd" stroke-width="1.1" stroke-dasharray="1.2 1.3"/></svg>
<div class="t" style="left:553.50px;top:349.03px;font-size:10.6px;line-height:10.6px;color:#1a1a1a;letter-spacing:0px">Videos</div>
<div class="t" style="left:553.50px;top:363.43px;font-size:10.6px;line-height:10.6px;color:#6d6d6d;letter-spacing:-0.4px">Dieser PC</div>
<svg style="position:absolute;left:290px;top:418.5px;" width="10" height="7" viewBox="0 0 10 7"><path d="M0.5 0.8 L4.7 5.2 L8.9 0.8" fill="none" stroke="#8a8a8a" stroke-width="1"/></svg>
<div class="t" style="left:302.50px;top:415.66px;font-size:13.4px;line-height:13.4px;color:#2b4d9e;letter-spacing:0.1px">Zuletzt verwendete Dateien (6)</div>
<div style="position:absolute;left:495px;top:422px;width:347px;height:1px;background:#ebebeb"></div>
<div class="t" style="left:330.00px;top:447.77px;font-size:10.9px;line-height:10.9px;color:#1a1a1a;letter-spacing:0.03px">veyon-cert.pem</div>
<div class="t" style="left:592.00px;top:447.77px;font-size:10.9px;line-height:10.9px;color:#6d6d6d;letter-spacing:0.02px">\\UCS-1689\sysvol\wenzel-univention.intra...\scripts</div>
<svg style="position:absolute;left:303.7px;top:443.3px;" width="16" height="20" viewBox="0 0 16 20"><path d="M0.5 0.5 H10.5 L14.5 4.5 V18.8 H0.5Z" fill="#f6f7fb" stroke="#c2c2c2" stroke-width="1"/><path d="M10.5 0.5 V4.5 H14.5Z" fill="#e4e4e4" stroke="#b8b8b8" stroke-width="0.9"/></svg>
<div class="t" style="left:330.00px;top:470.27px;font-size:10.9px;line-height:10.9px;color:#1a1a1a;letter-spacing:0.03px">CAcert.pem</div>
<div class="t" style="left:592.00px;top:470.27px;font-size:10.9px;line-height:10.9px;color:#6d6d6d;letter-spacing:0.02px">Lokaler Datenträger (C:)\test</div>
<svg style="position:absolute;left:303.7px;top:465.8px;" width="16" height="20" viewBox="0 0 16 20"><path d="M0.5 0.5 H10.5 L14.5 4.5 V18.8 H0.5Z" fill="#f6f7fb" stroke="#c2c2c2" stroke-width="1"/><path d="M10.5 0.5 V4.5 H14.5Z" fill="#e4e4e4" stroke="#b8b8b8" stroke-width="0.9"/></svg>
<div class="t" style="left:330.00px;top:492.77px;font-size:10.9px;line-height:10.9px;color:#1a1a1a;letter-spacing:0.03px">autorun</div>
<div class="t" style="left:592.00px;top:492.77px;font-size:10.9px;line-height:10.9px;color:#6d6d6d;letter-spacing:0.02px">D:\</div>
<svg style="position:absolute;left:303.7px;top:488.3px;" width="16" height="20" viewBox="0 0 16 20"><path d="M0.5 0.5 H10.5 L14.5 4.5 V18.8 H0.5Z" fill="#f6f7fb" stroke="#c2c2c2" stroke-width="1"/><path d="M10.5 0.5 V4.5 H14.5Z" fill="#e4e4e4" stroke="#b8b8b8" stroke-width="0.9"/><circle cx="1.8" cy="15.5" r="4.2" fill="none" stroke="#b4c0cc" stroke-width="2" stroke-dasharray="1.6 1.2"/><circle cx="1.8" cy="15.5" r="3.4" fill="#b9c4cf"/><circle cx="1.8" cy="15.5" r="1.4" fill="#6f7b86"/></svg>
<div class="t" style="left:330.00px;top:515.27px;font-size:10.9px;line-height:10.9px;color:#1a1a1a;letter-spacing:-0.57px">SW_DVD5_Office_Professional_Plus_2019_32_BIT_X...</div>
<div class="t" style="left:592.00px;top:515.27px;font-size:10.9px;line-height:10.9px;color:#6d6d6d;letter-spacing:0.02px">\\UCS-1139\sysvol\wenzel-univention.intranet</div>
<svg style="position:absolute;left:303.7px;top:510.8px;" width="16" height="20" viewBox="0 0 16 20"><path d="M0.5 0.5 H10.5 L14.5 4.5 V18.8 H0.5Z" fill="#f6f7fb" stroke="#c2c2c2" stroke-width="1"/><path d="M10.5 0.5 V4.5 H14.5Z" fill="#e4e4e4" stroke="#b8b8b8" stroke-width="0.9"/><circle cx="7.3" cy="12.3" r="4.8" fill="#d6d6d8" stroke="#bdbdbd" stroke-width="0.6"/><circle cx="7.3" cy="12.3" r="1.2" fill="#f0f0f0"/></svg>
<div class="t" style="left:330.00px;top:537.77px;font-size:10.9px;line-height:10.9px;color:#1a1a1a;letter-spacing:0.03px">italc-key_ucs-1139.pub.key</div>
<div class="t" style="left:592.00px;top:537.77px;font-size:10.9px;line-height:10.9px;color:#6d6d6d;letter-spacing:0.02px">\\UCS-1139\sysvol\wenzel-univention.intra...\scripts</div>
<svg style="position:absolute;left:303.7px;top:533.3px;" width="16" height="20" viewBox="0 0 16 20"><path d="M0.5 0.5 H10.5 L14.5 4.5 V18.8 H0.5Z" fill="#f6f7fb" stroke="#c2c2c2" stroke-width="1"/><path d="M10.5 0.5 V4.5 H14.5Z" fill="#e4e4e4" stroke="#b8b8b8" stroke-width="0.9"/><path d="M2.5 6.5 H12.5 M2.5 8.5 H12.5 M2.5 10.5 H12.5 M2.5 12.5 H12.5 M2.5 14.5 H12.5 M2.5 16.5 H12.5" stroke="#b8b8b8" stroke-width="0.6"/></svg>
<div class="t" style="left:330.00px;top:560.27px;font-size:10.9px;line-height:10.9px;color:#1a1a1a;letter-spacing:0.03px">italc-key_ucs-9537.pub.key</div>
<div class="t" style="left:592.00px;top:560.27px;font-size:10.9px;line-height:10.9px;color:#6d6d6d;letter-spacing:0.02px">\\UCS-9537\sysvol\wenzel-univention.intra...\scripts</div>
<svg style="position:absolute;left:303.7px;top:555.8px;" width="16" height="20" viewBox="0 0 16 20"><path d="M0.5 0.5 H10.5 L14.5 4.5 V18.8 H0.5Z" fill="#f6f7fb" stroke="#c2c2c2" stroke-width="1"/><path d="M10.5 0.5 V4.5 H14.5Z" fill="#e4e4e4" stroke="#b8b8b8" stroke-width="0.9"/><path d="M2.5 6.5 H12.5 M2.5 8.5 H12.5 M2.5 10.5 H12.5 M2.5 12.5 H12.5 M2.5 14.5 H12.5 M2.5 16.5 H12.5" stroke="#b8b8b8" stroke-width="0.6"/></svg>
<div class="t" style="left:152.60px;top:628.18px;font-size:10.3px;line-height:10.3px;color:#3b4a5e;letter-spacing:0.05px">12 Elemente</div>
<div style="position:absolute;left:220px;top:627px;width:1px;height:11px;background:#f0f0f0"></div>
<svg style="position:absolute;left:807px;top:626px;" width="15" height="12" viewBox="0 0 15 12"><rect x="0.5" y="0.5" width="3.5" height="11" fill="#f4f4f4" stroke="#aaa" stroke-width="0.9"/><circle cx="2.25" cy="2.6" r="0.7" fill="#4a8"/><circle cx="2.25" cy="5.6" r="0.7" fill="#59f"/><circle cx="2.25" cy="9.2" r="0.8" fill="#d33"/><path d="M5.5 2.6 H8.5 M10.5 2.6 H13.5 M5.5 5.9 H8.5 M10.5 5.9 H13.5 M5.5 9.3 H8.5 M10.5 9.3 H13.5" stroke="#777" stroke-width="1"/></svg>
<svg style="position:absolute;left:828px;top:627px;" width="13" height="10" viewBox="0 0 13 10"><rect x="0.5" y="0.5" width="12" height="9" fill="#fff" stroke="#8a8a8a" stroke-width="1"/><rect x="1.7" y="1.7" width="9.6" height="6.6" fill="#9ccbee"/><path d="M1.7 5 Q5 3.5 11.3 6.5 V8.3 H1.7Z" fill="#2f5f7a"/></svg>
<svg style="position:absolute;left:636px;top:23px;" width="12" height="19" viewBox="0 0 12 19"><path d="M0.6 0.6 V15.6 L4.2 12.2 L6.6 17.8 L8.8 16.8 L6.5 11.4 H11.2Z" fill="#fff" stroke="#000" stroke-width="1"/></svg>
<svg style="position:absolute;left:227.5px;top:116px;" width="11" height="17" viewBox="0 0 11 17"><path d="M0.6 0.6 V13.8 L3.8 10.8 L6 15.8 L8 14.9 L5.9 10.1 H10.2Z" fill="#fff" stroke="#3a3a44" stroke-width="1"/></svg>
</body></html>
